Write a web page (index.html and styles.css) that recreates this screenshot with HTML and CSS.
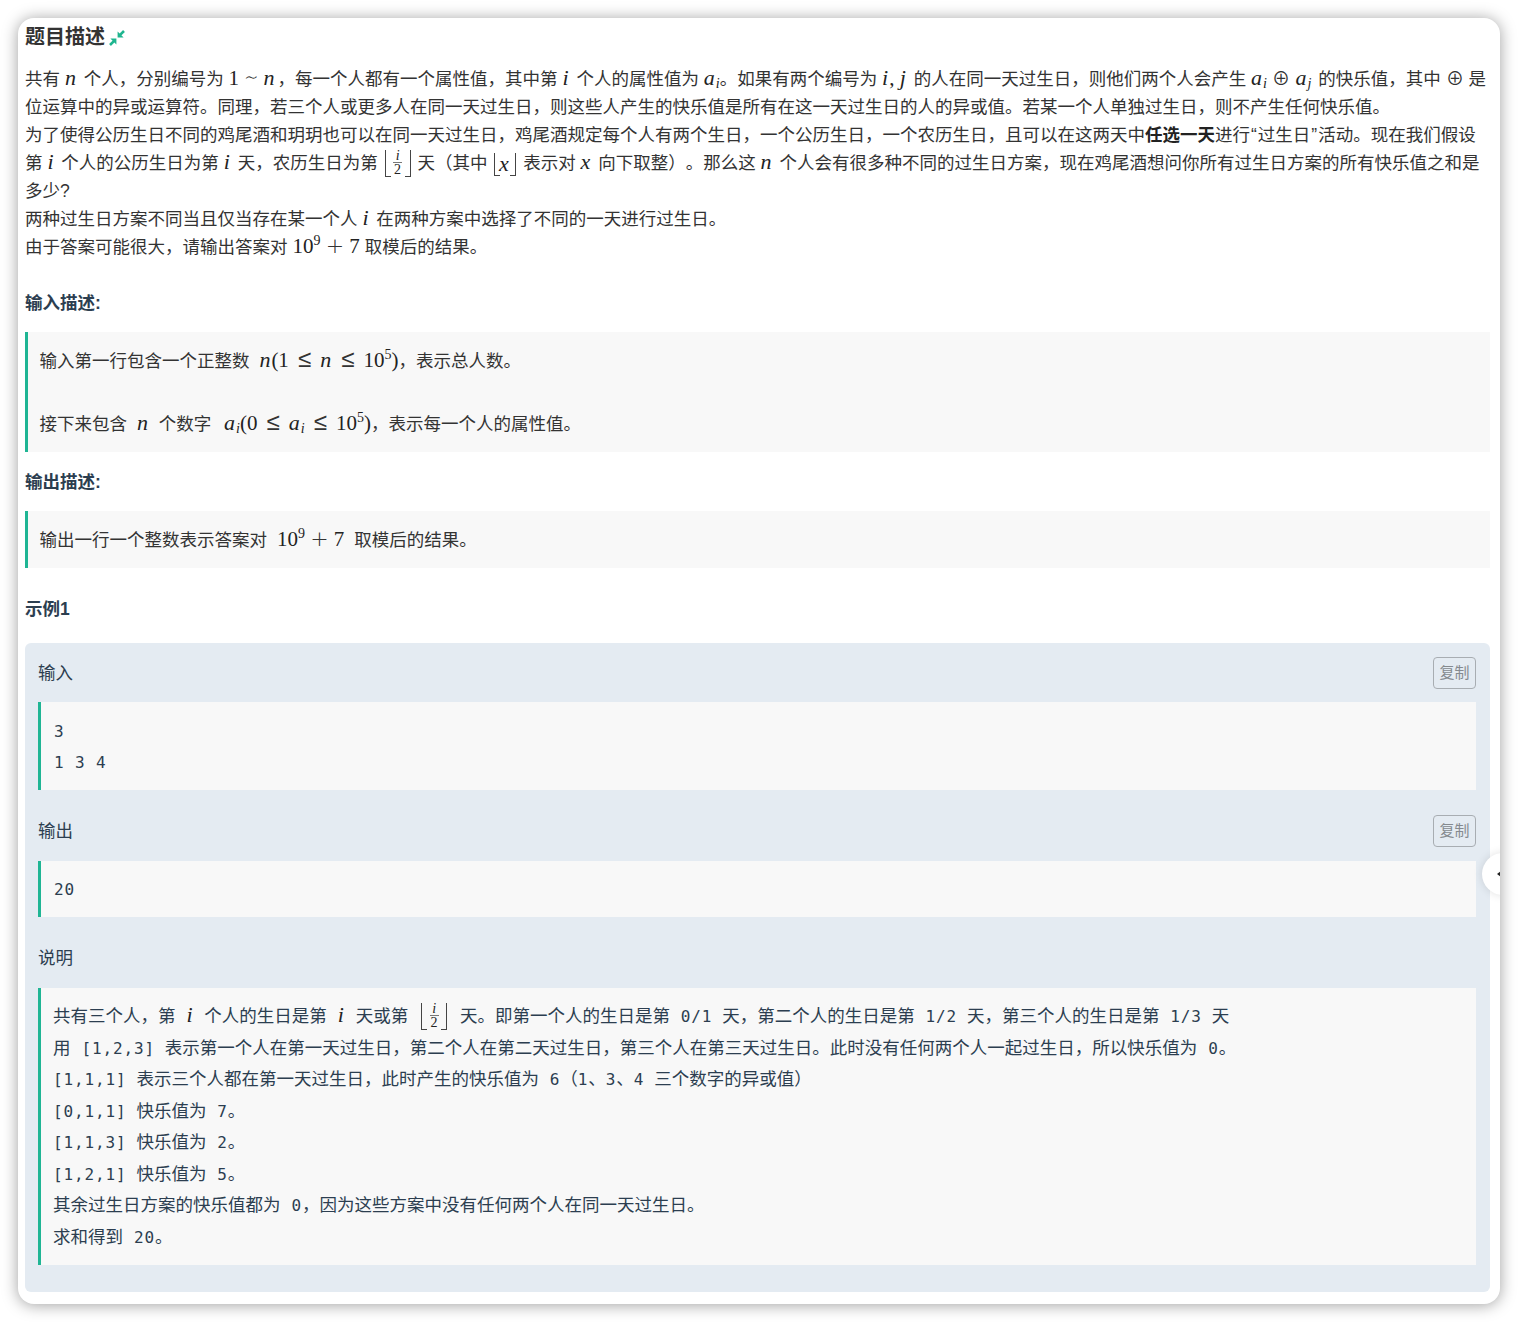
FILE: index.html
```html
<!DOCTYPE html>
<html lang="zh-CN">
<head>
<meta charset="utf-8">
<title>题目描述</title>
<link rel="stylesheet" href="styles.css">
</head>
<body>
<main class="window">
  <h2 class="title">题目描述
    <svg class="pin" viewBox="0 0 16 16" width="16" height="16" aria-hidden="true"><path d="M8.6 7.4V1.4L14.6 7.4Z M7.4 8.6V14.6L1.4 8.6Z"/><path class="pin-shaft" d="M10.8 5.2 15 1 M5.2 10.8 1 15"/></svg>
  </h2>
  <div class="desc">
    <div>共有 <span class="m"><i>n</i></span> 个人，分别编号为 <span class="m">1 <span class="op sim">∼</span> <i>n</i></span>，每一个人都有一个属性值，其中第 <span class="m"><i>i</i></span> 个人的属性值为 <span class="m pre"><i>a</i><sub><i>i</i></sub></span>。如果有两个编号为 <span class="m"><i>i</i>, <i>j</i></span> 的人在同一天过生日，则他们两个人会产生 <span class="m"><i>a</i><sub><i>i</i></sub> <span class="op">⊕</span> <i>a</i><sub><i>j</i></sub></span> 的快乐值，其中 <span class="m pre"><span class="op">⊕</span></span> 是位运算中的异或运算符。同理，若三个人或更多人在同一天过生日，则这些人产生的快乐值是所有在这一天过生日的人的异或值。若某一个人单独过生日，则不产生任何快乐值。</div>
    <div>为了使得公历生日不同的鸡尾酒和玥玥也可以在同一天过生日，鸡尾酒规定每个人有两个生日，一个公历生日，一个农历生日，且可以在这两天中<b>任选一天</b>进行<span class="qm">“</span>过生日<span class="qm">”</span>活动。现在我们假设第 <span class="m"><i>i</i></span> 个人的公历生日为第 <span class="m"><i>i</i></span> 天，农历生日为第 <span class="floor"><span class="frac"><i>i</i><span class="den">2</span></span></span> 天（其中 <span class="floor small"><span class="m"><i>x</i></span></span> 表示对 <span class="m"><i>x</i></span> 向下取整）。那么这 <span class="m"><i>n</i></span> 个人会有很多种不同的过生日方案，现在鸡尾酒想问你所有过生日方案的所有快乐值之和是多少?</div>
    <div>两种过生日方案不同当且仅当存在某一个人 <span class="m"><i>i</i></span> 在两种方案中选择了不同的一天进行过生日。</div>
    <div>由于答案可能很大，请输出答案对 <span class="m pre">10<sup>9</sup> <span class="op plus">+</span> 7</span> 取模后的结果。</div>
  </div>

  <h4 class="head head-first">输入描述:</h4>
  <div class="quote">
    <p>输入第一行包含一个正整数 <span class="m gap end"><i>n</i>(1 <span class="op le">≤</span> <i>n</i> <span class="op le">≤</span> 10<sup>5</sup>)</span>，表示总人数。</p>
    <p class="next">接下来包含 <span class="m gap"><i>n</i></span> 个数字 <span class="m gap end lead"><i>a</i><sub><i>i</i></sub>(0 <span class="op le">≤</span> <i>a</i><sub><i>i</i></sub> <span class="op le">≤</span> 10<sup>5</sup>)</span>，表示每一个人的属性值。</p>
  </div>

  <h4 class="head">输出描述:</h4>
  <div class="quote">
    <p>输出一行一个整数表示答案对 <span class="m gap">10<sup>9</sup> <span class="op plus">+</span> 7</span> 取模后的结果。</p>
  </div>

  <h4 class="head head-sample">示例1</h4>
  <section class="sample">
    <div class="bar bar-first"><span>输入</span><button class="copy">复制</button></div>
    <pre class="code">3
1 3 4</pre>
    <div class="bar"><span>输出</span><button class="copy">复制</button></div>
    <pre class="code code-single">20</pre>
    <div class="bar"><span>说明</span></div>
    <div class="note">
      <div>共有三个人，第 <span class="m gap"><i>i</i></span> 个人的生日是第 <span class="m gap"><i>i</i></span> 天或第 <span class="floor gap"><span class="frac"><i>i</i><span class="den">2</span></span></span> 天。即第一个人的生日是第 <code>0/1</code> 天，第二个人的生日是第 <code>1/2</code> 天，第三个人的生日是第 <code>1/3</code> 天</div>
      <div>用 <code>[1,2,3]</code> 表示第一个人在第一天过生日，第二个人在第二天过生日，第三个人在第三天过生日。此时没有任何两个人一起过生日，所以快乐值为 <code class="tight">0</code>。</div>
      <div><code class="flush">[1,1,1]</code> 表示三个人都在第一天过生日，此时产生的快乐值为 <code class="tight">6</code>（<code class="bare">1</code>、<code class="bare">3</code>、<code class="flush">4</code> 三个数字的异或值）</div>
      <div><code class="flush">[0,1,1]</code> 快乐值为 <code class="tight">7</code>。</div>
      <div><code class="flush">[1,1,3]</code> 快乐值为 <code class="tight">2</code>。</div>
      <div><code class="flush">[1,2,1]</code> 快乐值为 <code class="tight">5</code>。</div>
      <div>其余过生日方案的快乐值都为 <code class="tight">0</code>，因为这些方案中没有任何两个人在同一天过生日。</div>
      <div>求和得到 <code class="tight">20</code>。</div>
    </div>
  </section>
  <button class="fold" aria-label="收起"><span class="fold-arrow"></span></button>
</main>
</body>
</html>
```

FILE: styles.css
```css
* { box-sizing: border-box; }
html, body { margin: 0; background: #fff; }
body {
  padding: 18px;
  font-family: "Liberation Sans", "Noto Sans CJK SC", sans-serif;
  font-size: 17.5px;
  color: #333;
  text-spacing-trim: space-all;
}
.window {
  position: relative;
  width: 1482px;
  height: 1286px;
  padding: 8px 10px 12px 7px;
  background: #fff;
  border-radius: 16px;
  overflow: hidden;
  box-shadow: 0 1px 16px rgba(0, 0, 0, .38);
}
.title {
  display: flex;
  align-items: center;
  gap: 4px;
  margin: 0;
  height: 22px;
  font-size: 20px;
  line-height: 22px;
  font-weight: 700;
  color: #333;
}
.pin { fill: #1fb58f; margin-top: 2px; }
.pin-shaft { fill: none; stroke: #1fb58f; stroke-width: 2.6; }
.desc { margin-top: 17px; padding-right: 2px; line-height: 28px; }
.desc b { font-weight: 700; color: #222; }
.qm { margin: 0 1px; }
.m {
  font-family: "Liberation Serif", "DejaVu Serif", serif;
  font-size: 21px;
  line-height: 1;
  margin: 0 2px 0 0;
  color: #222;
}
.m.pre { margin-right: 0; }
.m i { font-size: 22px; font-style: italic; letter-spacing: 1px; }
.m sub, .m sup { font-size: 14px; line-height: 0; }
.m sub { vertical-align: -3px; }
.m sub i { font-size: 14px; letter-spacing: 0; }
.m sup { vertical-align: 8px; }
.m.gap { margin: 0 5px; }
.m.gap.end { margin-right: 0; }
.m.gap.lead { margin-left: 8px; }
.note .m.gap { margin: 0 6px; }
.op {
  font-family: "DejaVu Sans", sans-serif;
  font-size: 18px;
  font-weight: 200;
  color: #333;
}
.op.sim { font-size: 22px; }
.op.plus { font-size: 22px; }
.op.le { font-size: 24px; margin: 0 3.8px; }
.floor {
  position: relative;
  display: inline-flex;
  align-items: center;
  justify-content: center;
  vertical-align: middle;
  width: 28px;
  height: 28px;
  margin: -6px 1px -4px;
  font-family: "Liberation Serif", serif;
}
.floor.gap { margin-left: 7px; margin-right: 7px; }
.floor::before, .floor::after {
  content: "";
  position: absolute;
  top: 1px;
  bottom: 0;
  width: 5px;
  border-bottom: 1px solid #444;
}
.floor::before { left: 1px; border-left: 1px solid #444; }
.floor::after { right: 1px; border-right: 1px solid #444; }
.floor.small { width: 24px; height: 24px; margin: -4px 1px -3px; }
.frac {
  display: inline-flex;
  flex-direction: column;
  align-items: center;
  font-size: 14px;
  line-height: 13px;
  color: #222;
}
.den { border-top: 1px solid #777; padding: 0 1px; line-height: 14px; }
.head {
  margin: 0;
  font-size: 17.5px;
  line-height: 28px;
  font-weight: 700;
  color: #2c3e50;
}
.head-first { margin-top: 28px; }
.quote + .head { margin-top: 16px; }
.quote + .head-sample { margin-top: 27px; }
.quote {
  margin-top: 15px;
  padding: 14.5px 12px 14.5px 11.5px;
  background: #f8f8f8;
  border-left: 3px solid #1fb594;
  line-height: 28px;
}
.quote p { margin: 0; }
.quote .next { margin-top: 35px; }
.sample {
  margin-top: 20px;
  padding: 0 14px 27px 13px;
  background: #e4ebf2;
  border-radius: 6px;
  color: #2c3e50;
}
.bar {
  display: flex;
  justify-content: space-between;
  align-items: center;
  padding: 25px 0 14px;
  line-height: 32px;
}
.bar-first { padding: 14px 0 13px; }
.copy {
  width: 43px;
  height: 32px;
  padding: 0;
  background: transparent;
  border: 1px solid #a8adb2;
  border-radius: 4px;
  color: #858a8f;
  font-family: inherit;
  font-size: 15px;
  line-height: 30px;
}
.code {
  margin: 0;
  padding: 13.5px 12px 12.5px 13px;
  background: #f8f8f8;
  border-left: 3px solid #1fb594;
  font-family: "DejaVu Sans Mono", monospace;
  font-size: 16px;
  letter-spacing: .87px;
  line-height: 31px;
  color: #2c3e50;
}
.code-single { padding: 12.5px 12px 12.5px 13px; }
.note {
  padding: 13px 12px 12px;
  background: #f8f8f8;
  border-left: 3px solid #1fb594;
  line-height: 31.5px;
}
code {
  font-family: "DejaVu Sans Mono", "Noto Sans CJK SC", monospace;
  font-size: 16px;
  letter-spacing: .87px;
  line-height: 1;
  margin: 0 5px 0 6px;
}
code.flush { margin: 0 5px 0 0; }
code.tight { margin: 0 0 0 6px; }
code.bare { margin: 0; }
.fold {
  position: absolute;
  top: 835px;
  left: 1464px;
  width: 42px;
  height: 42px;
  padding: 0;
  background: #fff;
  border: 0;
  border-radius: 50%;
  box-shadow: 0 0 10px rgba(0, 0, 0, .12);
}
.fold-arrow {
  position: absolute;
  left: 15px;
  top: 18px;
  border: 3px solid transparent;
  border-right: 4px solid #222;
  border-left: 0;
}
```
